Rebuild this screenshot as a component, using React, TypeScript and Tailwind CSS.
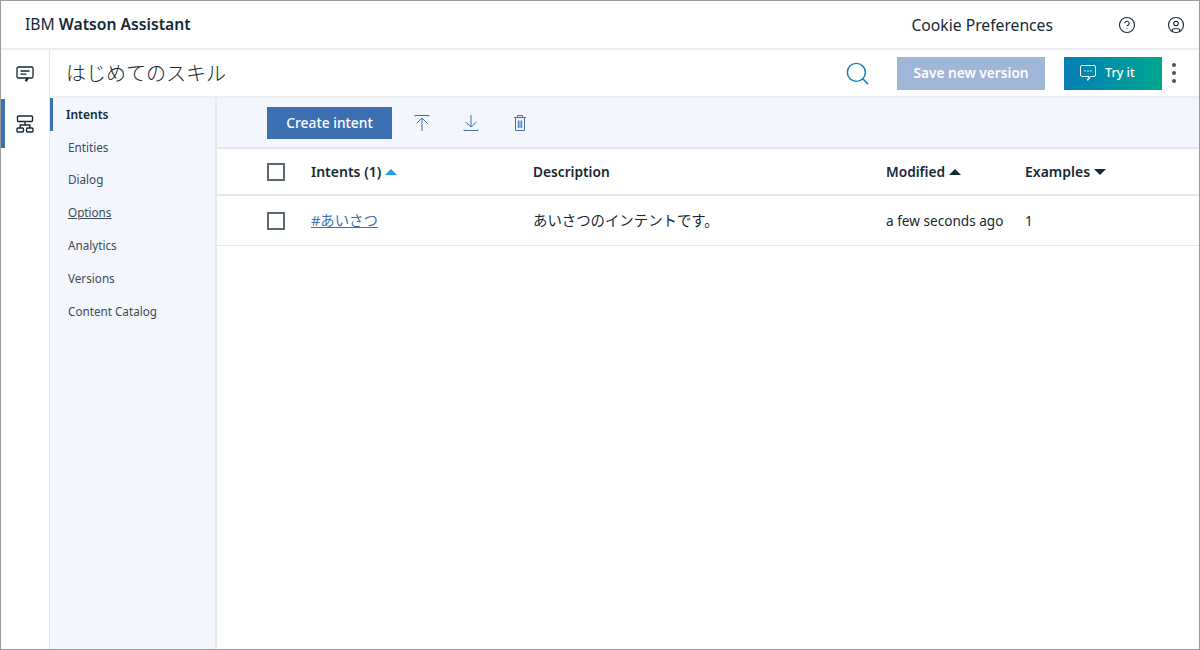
import { CircleHelp, CircleUser, Search } from "lucide-react"

const font = { fontFamily: '"Noto Sans", "Noto Sans CJK JP", sans-serif' }

const navItems = ["Entities", "Dialog", "Options", "Analytics", "Versions", "Content Catalog"]

function ChatIcon({ className }: { className?: string }) {
  return (
    <svg viewBox="0 0 20 20" fill="none" stroke="currentColor" strokeWidth="1.3" className={className}>
      <path d="M3.500 3h13a1.500 1.500 0 0 1 1.500 1.500v8a1.500 1.500 0 0 1-1.500 1.500h-3.200l-1.800 3-.9-.6 1.300-2.400H3.500A1.500 1.500 0 0 1 2 12.500v-8A1.500 1.500 0 0 1 3.500 3z" />
      <path d="M5.500 7h9M5.500 10.200h6" />
    </svg>
  )
}

function TreeIcon({ className }: { className?: string }) {
  return (
    <svg viewBox="0 0 20 20" fill="none" stroke="currentColor" strokeWidth="1.4" className={className}>
      <rect x="2.500" y="2" width="15" height="5.500" rx="1" />
      <rect x="2" y="14" width="6.500" height="4" rx="1" />
      <rect x="11.500" y="14" width="6.500" height="4" rx="1" />
      <path d="M10 7.500v3.500M5.200 14v-3h9.600v3" />
    </svg>
  )
}

function UploadIcon() {
  return (
    <svg viewBox="0 0 18 18" fill="none" stroke="#3d70b2" strokeWidth="1" className="w-[18px] h-[18px]">
      <path d="M2 2.500V1.500h14v1M9 17V4M3.500 9.500 9 4l5.500 5.500" />
    </svg>
  )
}

function DownloadIcon() {
  return (
    <svg viewBox="0 0 18 18" fill="none" stroke="#3d70b2" strokeWidth="1" className="w-[18px] h-[18px]">
      <path d="M2 15.500v1h14v-1M9 1v12M3.500 8 9 13l5.500-5" />
    </svg>
  )
}

function TrashIcon() {
  return (
    <svg viewBox="0 0 18 18" fill="none" stroke="#3d70b2" strokeWidth="1" className="w-[18px] h-[18px]">
      <path d="M3 3.500h12M6.500 3.500V1.500h5v2M4.500 3.500v13h9v-13M7.300 6.500v7.500M9 6.500v7.500M10.700 6.500v7.500" />
    </svg>
  )
}

function SortUp({ color }: { color: string }) {
  return <span className={`ml-1 w-0 h-0 border-x-[6px] border-x-transparent border-b-[6px] ${color}`} />
}

function Checkbox() {
  return <div className="w-[18px] h-[18px] border-2 border-[#5a6872] bg-white" />
}

export default function App() {
  return (
    <div style={font} className="w-[1200px] h-[650px] flex flex-col overflow-hidden border border-[#9b9b9b] bg-white text-[#152935]">
      {/* Top bar */}
      <header className="h-[49px] shrink-0 flex items-center pl-[24px] border-b-2 border-[#eceef1]">
        <span className="text-[15.700px] pt-[1px]">IBM <span className="font-semibold">Watson Assistant</span></span>
        <span className="ml-auto text-[15.700px] pt-[2px]">Cookie Preferences</span>
        <CircleHelp className="ml-[65px] w-[18px] h-[18px]" strokeWidth={1.5} />
        <CircleUser className="ml-[31px] mr-[14px] w-[18px] h-[18px]" strokeWidth={1.5} />
      </header>

      <div className="flex-1 flex min-h-0">
        {/* Icon rail */}
        <aside className="w-[49px] shrink-0 border-r border-[#e3e6ea] flex flex-col">
          <div className="h-[49px] flex items-center justify-center pb-[2px]"><ChatIcon className="w-[20px] h-[20px]" /></div>
          <div className="h-[49px] flex items-center justify-center border-l-[4px] border-[#3d70b2] pr-[4px]"><TreeIcon className="w-[20px] h-[20px]" /></div>
        </aside>

        <div className="flex-1 flex flex-col min-w-0">
          {/* Skill title bar */}
          <div className="h-[48px] shrink-0 flex items-center pl-[16px] border-b-2 border-[#eceef1]">
            <span className="text-[20px] font-light pt-[2px]">はじめてのスキル</span>
            <Search className="ml-auto w-[27px] h-[27px] text-[#0f7fb5]" strokeWidth={1.3} />
            <button className="ml-[26px] w-[148px] h-[33px] bg-[#9fb6d8] text-white text-[13.700px] font-semibold">Save new version</button>
            <button className="ml-[19px] w-[98px] h-[33px] bg-gradient-to-r from-[#0a7cb8] to-[#00a78f] text-white text-[12.500px] font-medium flex items-center pl-[15px] gap-[8px]">
              <svg viewBox="0 0 18 18" fill="none" stroke="currentColor" strokeWidth="1" className="w-[18px] h-[18px]">
                <path d="M3 1.500h12A1.500 1.500 0 0 1 16.500 3v8a1.500 1.500 0 0 1-1.500 1.500h-3.500L9 16.500l-.6-.5 1.600-3.500H3A1.500 1.500 0 0 1 1.500 11V3A1.500 1.500 0 0 1 3 1.500z" />
                <path d="M5.500 7h1M8.500 7h1M11.500 7h1" strokeWidth="1.300" />
              </svg>
              Try it
            </button>
            <div className="ml-[10px] mr-[23px] flex flex-col gap-[4px]">
              <span className="w-[4px] h-[4px] rounded-full bg-[#4d5358]" />
              <span className="w-[4px] h-[4px] rounded-full bg-[#4d5358]" />
              <span className="w-[4px] h-[4px] rounded-full bg-[#4d5358]" />
            </div>
          </div>

          <div className="flex-1 flex min-h-0">
            {/* Skill nav */}
            <nav className="w-[167px] shrink-0 bg-[#f3f7fd] border-r-2 border-[#e6e9ee] text-[11.700px] text-[#3d4a54]">
              <div className="h-[33px] flex items-center pl-[13px] border-l-[3px] border-[#3d70b2] font-semibold text-[#152935] text-[12px]">Intents</div>
              {navItems.map((item) => (
                <div key={item} className={`h-[32.850px] flex items-center pl-[18px] ${item === "Options" ? "underline" : ""}`}>{item}</div>
              ))}
            </nav>

            {/* Intents table */}
            <main className="flex-1 min-w-0 flex flex-col">
              <div className="h-[51px] shrink-0 bg-[#f3f7fd] flex items-center pl-[50px] border-b-2 border-[#e3e6ea]">
                <button className="w-[125px] h-[32px] mt-[1px] bg-[#3d70b2] text-white text-[13.800px] font-medium">Create intent</button>
                <span className="ml-[21px]"><UploadIcon /></span>
                <span className="ml-[31px]"><DownloadIcon /></span>
                <span className="ml-[31px]"><TrashIcon /></span>
              </div>

              <div className="h-[47px] shrink-0 flex items-center border-b-2 border-[#e3e6ea] text-[13.700px] font-semibold">
                <div className="w-[94px] pl-[50px]"><Checkbox /></div>
                <div className="w-[222px] flex items-center text-[14px]">Intents (1)<SortUp color="border-b-[#1f9be8]" /></div>
                <div className="w-[353px] pt-[2px]">Description</div>
                <div className="w-[139px] flex items-center pt-[2px]">Modified<SortUp color="border-b-[#152935]" /></div>
                <div className="flex items-center text-[14px]">Examples<span className="ml-1 w-0 h-0 border-x-[6px] border-x-transparent border-t-[6px] border-t-[#152935]" /></div>
              </div>

              <div className="h-[50px] shrink-0 flex items-center border-b border-[#e3e6ea] text-[13.600px]">
                <div className="w-[94px] pl-[50px]"><Checkbox /></div>
                <div className="w-[222px] text-[14.400px] text-[#3d70b2] underline">#あいさつ</div>
                <div className="w-[353px] text-[14.400px]">あいさつのインテントです。</div>
                <div className="w-[139px] pt-[2px]">a few seconds ago</div>
                <div className="pt-[2px]">1</div>
              </div>
            </main>
          </div>
        </div>
      </div>
    </div>
  )
}
